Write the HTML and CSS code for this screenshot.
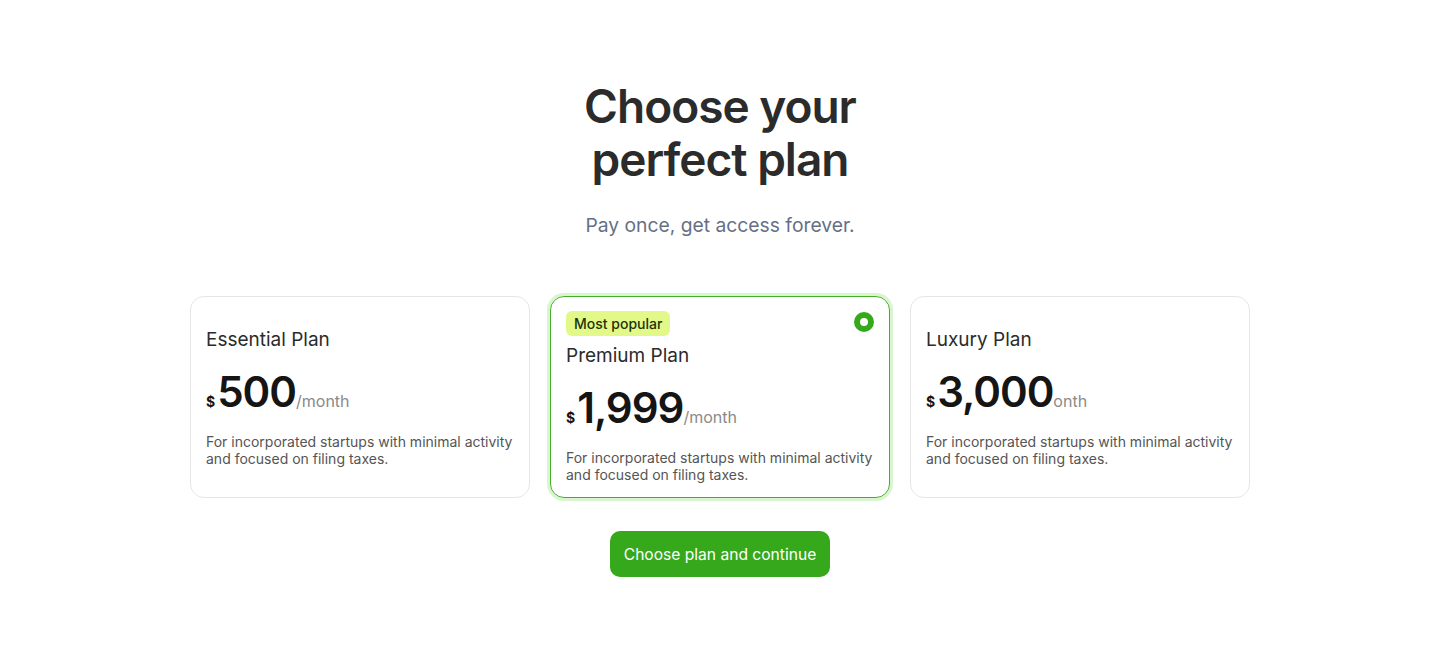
FILE: index.html
```html
<!DOCTYPE html>
<html>
    <head>
        <meta charset="utf-8">
        <title>Choose your perfect plan</title>
        <link rel="stylesheet" href="styles.css">
    </head>
    <body>
        <div class="page">
            <h1 class="title">Choose your<br>perfect plan</h1>
            <p class="subtitle">Pay once, get access forever.</p>

            <div class="plans">
                <div class="plan">
                    <div class="plan-name">Essential Plan</div>
                    <div class="price"><span class="cur">$</span><span class="amount">500</span><span class="per">/month</span></div>
                    <div class="desc">For incorporated startups with minimal activity and focused on filing taxes.</div>
                </div>
                <div class="plan selected">
                    <span class="radio"></span>
                    <div class="badge">Most popular</div>
                    <div class="plan-name">Premium Plan</div>
                    <div class="price"><span class="cur">$</span><span class="amount">1,999</span><span class="per">/month</span></div>
                    <div class="desc">For incorporated startups with minimal activity and focused on filing taxes.</div>
                </div>
                <div class="plan">
                    <div class="plan-name">Luxury Plan</div>
                    <div class="price"><span class="cur">$</span><span class="amount">3,000</span><span class="per">onth</span></div>
                    <div class="desc">For incorporated startups with minimal activity and focused on filing taxes.</div>
                </div>
            </div>

            <button class="continue">Choose plan and continue</button>
        </div>
    </body>
</html>
```

FILE: styles.css
```css
*{
    box-sizing: border-box;
    margin: 0px;
    padding: 0px;
}
body
{
    font-family: Inter, "Noto Sans", sans-serif;
    background: #ffffff;
    color: #2d2d2d;
}
.page
{
    display: flex;
    flex-direction: column;
    align-items: center;
    padding-top: 80px;
}
.title
{
    font-size: 46px;
    line-height: 53px;
    font-weight: 600;
    letter-spacing: -1px;
    text-align: center;
    color: #2b2b2b;
}
.subtitle
{
    margin-top: 25px;
    font-size: 19.3px;
    line-height: 28px;
    color: #667085;
}
.plans
{
    display: flex;
    gap: 20px;
    margin-top: 57px;
}
.plan
{
    position: relative;
    width: 340px;
    height: 202px;
    padding: 14px 15px;
    border: 1px solid #e6e6e6;
    border-radius: 14px;
    display: flex;
    flex-direction: column;
    justify-content: center;
}
.plan.selected
{
    border: 1.5px solid #46ad2a;
    box-shadow: 0 0 0 3px #d9f5cf;
}
.radio
{
    position: absolute;
    top: 15px;
    right: 15px;
    width: 20px;
    height: 20px;
    border-radius: 50%;
    border: 6px solid #36a81b;
    background: #ffffff;
}
.badge
{
    align-self: flex-start;
    height: 25px;
    line-height: 25px;
    padding: 0 8px;
    border-radius: 6px;
    background: #e2f98a;
    color: #1e3308;
    font-size: 14px;
    font-weight: 500;
    margin-bottom: 8px;
}
.plan-name
{
    font-size: 19px;
    line-height: 24px;
    font-weight: 400;
    color: #2b2b2b;
}
.price
{
    margin-top: 18px;
    font-size: 42px;
    line-height: 44px;
    color: #151515;
}
.cur
{
    font-size: 14px;
    line-height: 1;
    font-weight: 700;
    margin-right: 2px;
}
.amount
{
    font-weight: 600;
    letter-spacing: -1px;
}
.per
{
    font-size: 16px;
    line-height: 1;
    color: #8a8a8a;
}
.desc
{
    margin-top: 19px;
    font-size: 14px;
    line-height: 17px;
    color: #555555;
}
.continue
{
    margin-top: 33px;
    width: 220px;
    height: 46px;
    border: none;
    border-radius: 10px;
    background: #36a81b;
    color: #ffffff;
    font-family: Inter, "Noto Sans", sans-serif;
    font-size: 15.6px;
    font-weight: 400;
}
```
